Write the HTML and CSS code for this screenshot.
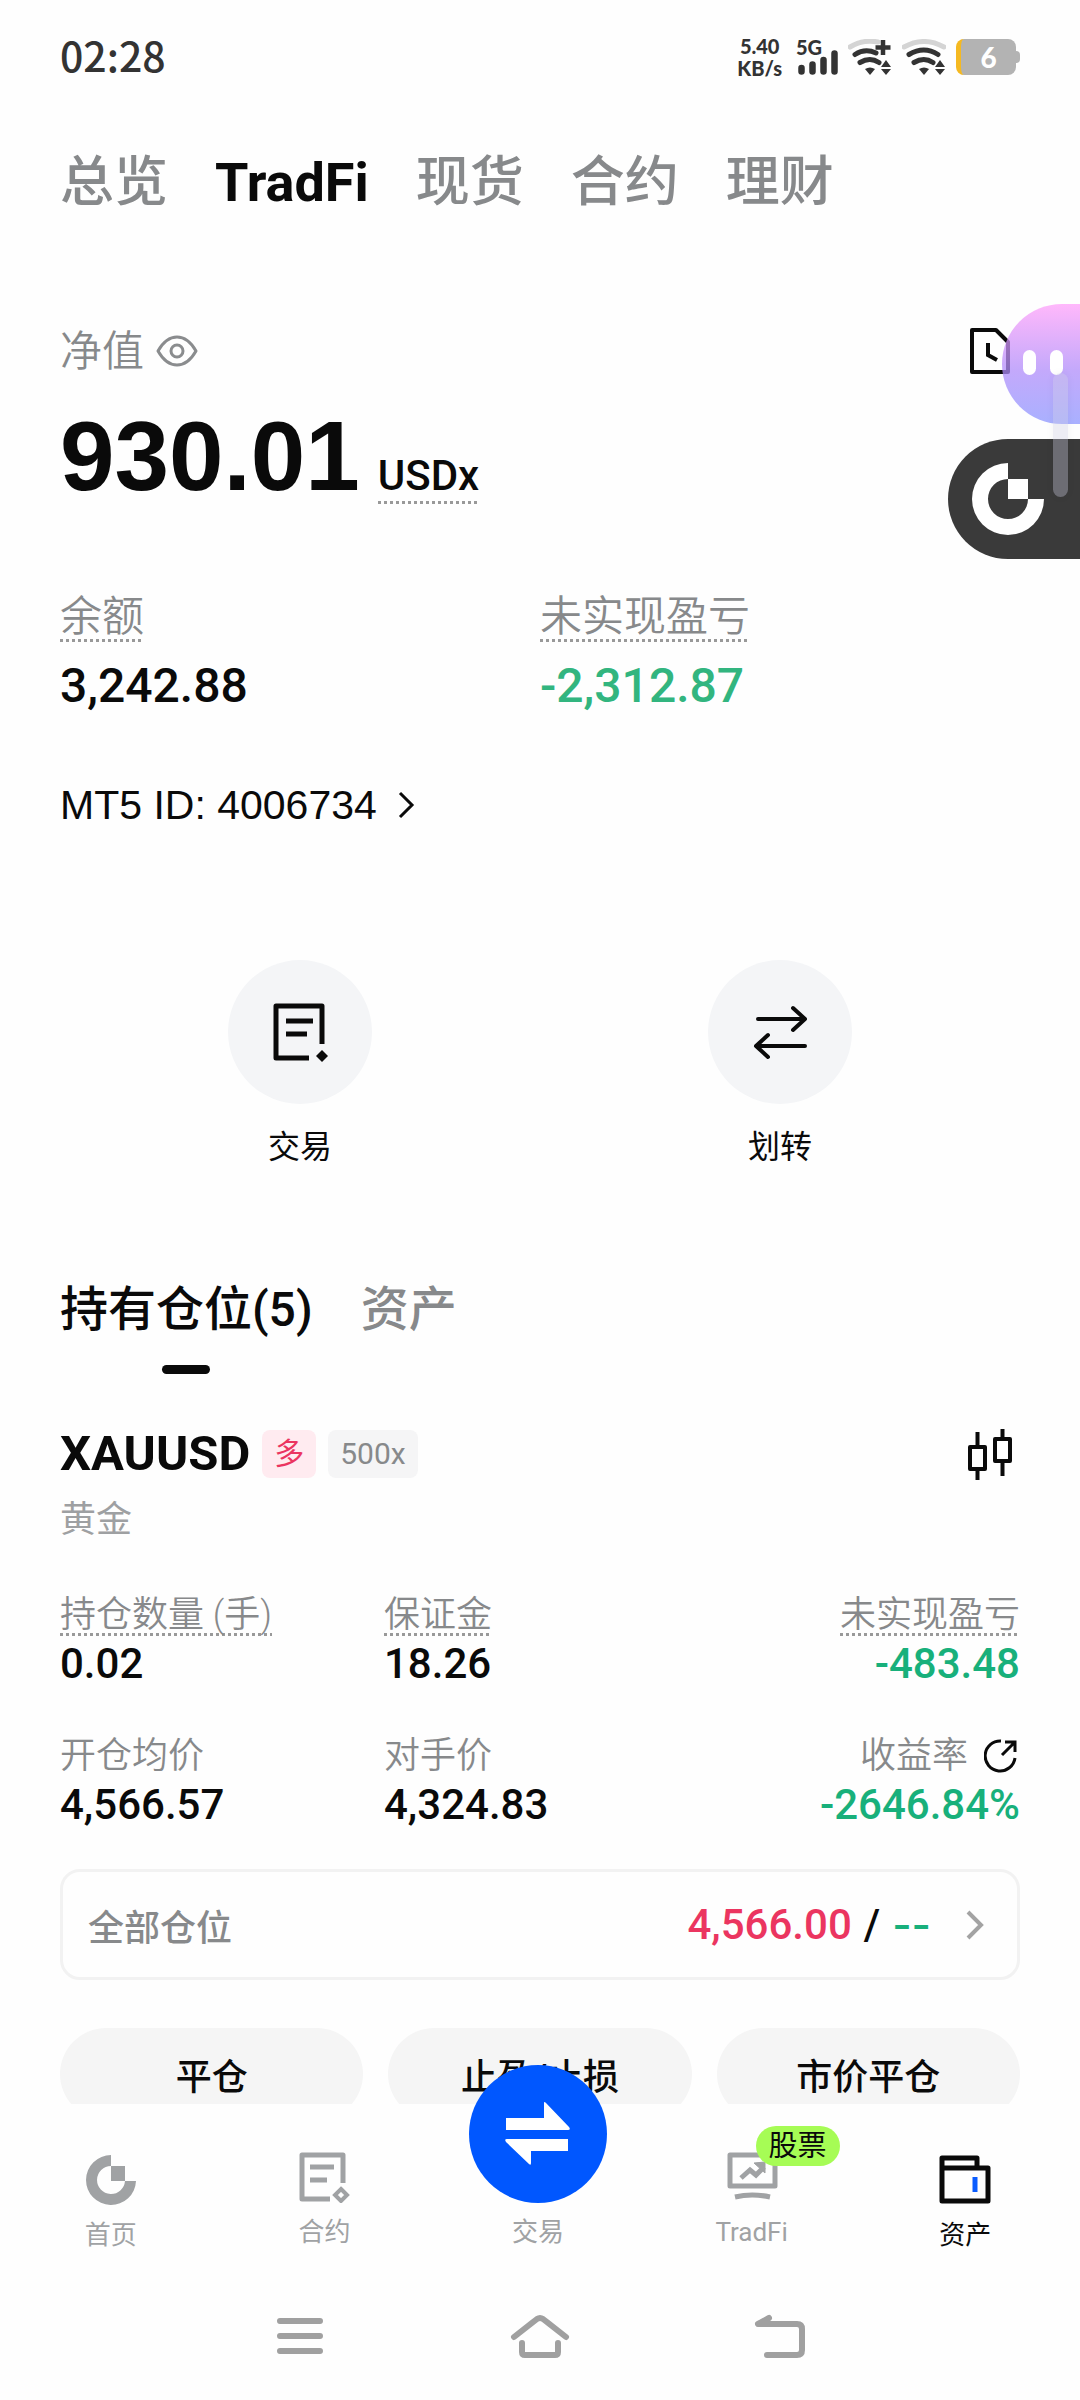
FILE: index.html
```html
<!DOCTYPE html>
<html lang="zh-CN">
  <head>
    <meta charset="utf-8" />
    <meta name="viewport" content="width=device-width, initial-scale=1" />
    <title>TradFi 资产</title>
    <link rel="stylesheet" href="styles.css">
  </head>
  <body>
    <header class="status-bar">
      <span class="time">02:28</span>
      <div class="status-icons">
        <div class="net-speed"><span>5.40</span><span>KB/s</span></div>
        <div class="signal">
          <span>5G</span>
          <svg width="42" height="36" viewBox="0 0 42 36"><path d="M5.500 29v3.500M16.500 25.500v7M27.500 21v11.500M38.500 14.500v18" stroke="#333" stroke-width="6.500" stroke-linecap="round"/></svg>
        </div>
        <svg width="44" height="36" viewBox="0 0 44 36" fill="none">
          <path d="M2 8Q15 0 30 3" stroke="#d4d4d4" stroke-width="5" stroke-linecap="round"/>
          <path d="M7 15.500Q17 9 28 14M12 23.500Q22 17.500 31 23.500" stroke="#333" stroke-width="5" stroke-linecap="round"/>
          <path d="M17 30Q22 27 27 30L22 36z" fill="#333"/>
          <path d="M35 1v15M27.500 8.500h15" stroke="#333" stroke-width="4.500"/>
          <path d="M38 21l5 7H33zM38 36l5-6H33z" fill="#333"/>
        </svg>
        <svg width="44" height="36" viewBox="0 0 44 36" fill="none">
          <path d="M2 8Q22-3 42 8" stroke="#d4d4d4" stroke-width="5" stroke-linecap="round"/>
          <path d="M7 15.500Q22 6.500 36 15.500M12 23.500Q22 17.500 31 23.500" stroke="#333" stroke-width="5" stroke-linecap="round"/>
          <path d="M17 30Q22 27 27 30L22 36z" fill="#333"/>
          <path d="M38 21l5 7H33zM38 36l5-6H33z" fill="#333"/>
        </svg>
        <div class="battery">6</div>
      </div>
    </header>

    <main class="page">
      <nav class="top-tabs">
        <a href="#">总览</a>
        <a href="#" class="active">TradFi</a>
        <a href="#">现货</a>
        <a href="#">合约</a>
        <a href="#">理财</a>
      </nav>

      <section class="equity">
        <div class="equity-head">
          <span class="label">净值</span>
          <button class="icon-btn" aria-label="显示或隐藏金额">
            <svg width="42" height="36" viewBox="0 0 42 36" fill="none" stroke="#8a8c8e" stroke-width="3"><path d="M2 18Q10 4 21 4t19 14Q32 32 21 32T2 18z" stroke-linejoin="round"/><circle cx="21" cy="18" r="6"/></svg>
          </button>
          <button class="icon-btn history" aria-label="历史记录">
            <svg width="40" height="48" viewBox="0 0 40 48" fill="none" stroke="#0a0a0a" stroke-width="4"><path d="M2 3h24l12 12v30H2z" stroke-linejoin="round"/><path d="M18 16v12l9 5"/></svg>
          </button>
        </div>
        <div class="amount">
          <strong>930.01</strong>
          <span class="unit dotted">USDx</span>
        </div>
        <div class="balances">
          <div>
            <span class="label dotted">余额</span>
            <div class="balance">3,242.88</div>
          </div>
          <div>
            <span class="label dotted">未实现盈亏</span>
            <div class="balance down">-2,312.87</div>
          </div>
        </div>
        <a href="#" class="account">MT5 ID: 4006734
          <svg width="18" height="28" viewBox="0 0 18 28" fill="none" stroke="#0a0a0a" stroke-width="3"><path d="M3 2l12 12L3 26"/></svg>
        </a>
      </section>

      <section class="actions">
        <button>
          <span class="circle">
            <svg width="58" height="60" viewBox="0 0 58 60" fill="none" stroke="#0a0a0a" stroke-width="5"><path d="M38 56H5V4h46v38" stroke-linejoin="round"/><path d="M15 19h27M15 32h21"/><path d="M51 48l6 6-6 6-6-6z" fill="#0a0a0a" stroke="none"/></svg>
          </span>
          交易
        </button>
        <button>
          <span class="circle">
            <svg width="56" height="56" viewBox="0 0 56 56" fill="none" stroke="#0a0a0a" stroke-width="4" stroke-linecap="round" stroke-linejoin="round"><path d="M6 15h47M41 4l12 11-12 11M53 42H4M16 31L4 42l12 11"/></svg>
          </span>
          划转
        </button>
      </section>

      <nav class="sub-tabs">
        <a href="#" class="active">持有仓位(5)</a>
        <a href="#">资产</a>
      </nav>

      <section class="position">
        <div class="position-head">
          <h2>XAUUSD</h2>
          <span class="tag long">多</span>
          <span class="tag">500x</span>
          <button class="icon-btn chart" aria-label="K线">
            <svg width="48" height="52" viewBox="0 0 48 52" fill="none" stroke="#0a0a0a" stroke-width="4"><path d="M4 19h15v22H4zM29 11h15v22H29z" stroke-linejoin="round"/><path d="M11.500 4v15M11.500 41v11M36.500 1v10M36.500 33v15"/></svg>
          </button>
        </div>
        <p class="name">黄金</p>

        <div class="stats">
          <div>
            <span class="stat-label dotted">持仓数量 (手)</span>
            <div class="stat">0.02</div>
          </div>
          <div>
            <span class="stat-label dotted">保证金</span>
            <div class="stat">18.26</div>
          </div>
          <div>
            <span class="stat-label dotted">未实现盈亏</span>
            <div class="stat up">-483.48</div>
          </div>
          <div>
            <span class="stat-label">开仓均价</span>
            <div class="stat">4,566.57</div>
          </div>
          <div>
            <span class="stat-label">对手价</span>
            <div class="stat">4,324.83</div>
          </div>
          <div>
            <span class="stat-label">收益率
              <button class="icon-btn share" aria-label="分享">
                <svg width="36" height="36" viewBox="0 0 36 36" fill="none" stroke="#0a0a0a" stroke-width="3"><path d="M17 3a15 15 0 1 0 14 17"/><path d="M18 17L31 4M21 4h10v10"/></svg>
              </button>
            </span>
            <div class="stat up">-2646.84%</div>
          </div>
        </div>

        <a href="#" class="tpsl">
          <span>全部仓位</span>
          <span class="tpsl-value"><span class="red">4,566.00</span> / <span class="empty">--</span></span>
          <svg width="20" height="32" viewBox="0 0 20 32" fill="none" stroke="#a3a3a3" stroke-width="4"><path d="M3 3l13 13L3 29"/></svg>
        </a>

        <div class="buttons">
          <button>平仓</button>
          <button>止盈/止损</button>
          <button>市价平仓</button>
        </div>
      </section>
    </main>

    <div class="scroll-thumb"></div>
    <button class="assistant" aria-label="助手"><i></i><i></i></button>
    <button class="float-logo" aria-label="悬浮窗">
      <svg width="72" height="72" viewBox="0 0 72 72" fill="#fff"><path d="M36 0v16a20 20 0 1 0 20 20h16A36 36 0 1 1 36 0z"/><path d="M36 16h20v20H36z"/></svg>
    </button>

    <footer class="bottom">
      <nav class="tab-bar">
        <a href="#" class="low">
          <svg width="50" height="52" viewBox="0 0 50 52" fill="#a0a2a4"><path d="M25 1v11a14 14 0 1 0 14 15h11A25 25 0 1 1 25 1z"/><path d="M25 12h14v15H25z"/></svg>
          首页
        </a>
        <a href="#">
          <svg width="52" height="52" viewBox="0 0 52 52" fill="none" stroke="#a0a2a4" stroke-width="5"><path d="M32 48H4V4h41v28" stroke-linejoin="round"/><path d="M12 16h24M12 29h17"/><path d="M43 38l6 6-6 6-6-6z" stroke-width="4"/></svg>
          合约
        </a>
        <a href="#">
          <span class="trade">
            <svg width="70" height="64" viewBox="0 0 70 64" fill="#fff"><path d="M3 16h38V1q0-2 2 0l23 24q2 3-1 3H3zM65 37H4q-3 0-1 3l23 22q2 2 2-1V49h37z"/></svg>
          </span>
          交易
        </a>
        <a href="#" class="stock">
          <svg width="52" height="52" viewBox="0 0 52 52" fill="none" stroke="#a0a2a4" stroke-width="5"><path d="M4 4h45v31H4z" stroke-linejoin="round"/><path d="M15 27l9-8 6 5 8-8"/><path d="M28 12l11-1v11z" fill="#a0a2a4" stroke-width="1"/><path d="M9 46q17-4 35 0"/></svg>
          <span class="badge">股票</span>
          TradFi
        </a>
        <a href="#" class="active low">
          <svg width="52" height="52" viewBox="0 0 52 52" fill="none" stroke="#0a0a0a" stroke-width="5"><path d="M3 14h46v33H3zM3 14V4h35v10" stroke-linejoin="round"/><path d="M36 23v15" stroke="#0a5cff"/></svg>
          资产
        </a>
      </nav>
      <div class="system-nav">
        <button aria-label="最近任务"><svg width="60" height="48" viewBox="0 0 60 48"><path d="M10 9h40M10 24h40M10 39h40"/></svg></button>
        <button aria-label="主页"><svg width="60" height="48" viewBox="0 0 60 48"><path d="M4 25L27 7q3-2 6 0l23 18M12 31v9q0 3 3 3h30q3 0 3-3v-9"/></svg></button>
        <button aria-label="返回"><svg width="60" height="48" viewBox="0 0 60 48"><path d="M19 6L8 12h39q5 0 5 5v21q0 5-5 5H17"/></svg></button>
      </div>
    </footer>
  </body>
</html>
```
FILE: styles.css
```css
* {
  box-sizing: border-box;
}

body {
  margin: 0;
  min-height: 100vh;
  background: #fefefe;
  color: #0a0a0a;
  font-family: Roboto, "Noto Sans CJK SC", sans-serif;
}

a {
  color: inherit;
  text-decoration: none;
}

button {
  padding: 0;
  border: none;
  background: none;
  color: inherit;
  font: inherit;
  cursor: pointer;
}

svg {
  display: block;
  flex-shrink: 0;
}

.icon-btn {
  display: flex;
}

/* phone status bar */
.status-bar {
  display: flex;
  justify-content: space-between;
  align-items: center;
  height: 114px;
  padding: 0 60px;
  color: #333;
}

.time {
  padding-bottom: 6px;
  font: 500 41px "Noto Sans CJK SC", sans-serif;
}

.status-icons {
  display: flex;
  align-items: center;
  gap: 10px;
  font-family: Lato, sans-serif;
  font-weight: 900;
}

.net-speed {
  display: flex;
  flex-direction: column;
  align-items: center;
  font-size: 20px;
  line-height: 22px;
  padding-right: 4px;
}

.signal {
  position: relative;
  font-size: 20px;
  line-height: 16px;
}

.signal span {
  position: absolute;
  top: 0;
  left: 0;
}

.battery {
  position: relative;
  width: 60px;
  height: 36px;
  margin-right: 4px;
  border-left: 5px solid #f5b921;
  border-radius: 8px;
  background: #b3b3b3;
  color: #fff;
  font-size: 28px;
  line-height: 36px;
  text-align: center;
}

.battery::after {
  content: "";
  position: absolute;
  top: 12px;
  right: -4px;
  width: 4px;
  height: 12px;
  border-radius: 0 4px 4px 0;
  background: #b3b3b3;
}

.page {
  padding: 39px 60px 300px;
}

.top-tabs {
  display: flex;
  gap: 47px;
  font-size: 54px;
  font-weight: 500;
  line-height: 60px;
  color: #87898b;
}

.top-tabs .active {
  color: #0a0a0a;
  font-weight: 700;
}

/* net value */
.equity-head {
  display: flex;
  align-items: center;
  gap: 12px;
  height: 60px;
  margin-top: 108px;
}

.label {
  color: #87898b;
  font-size: 42px;
  font-weight: 350;
  line-height: 51px;
}

.history {
  margin-left: auto;
  margin-right: 10px;
}

/* square-dotted hint underline */
.dotted {
  display: inline-block;
  background: repeating-linear-gradient(90deg, #999 0 3px, transparent 3px 6px) left bottom / 100% 3px no-repeat;
}

.amount {
  display: flex;
  align-items: baseline;
  gap: 18px;
  height: 96px;
  margin-top: 27px;
}

.amount strong {
  font-family: "Liberation Sans", sans-serif;
  font-size: 98px;
  line-height: 96px;
}

.unit {
  font-size: 42px;
  font-weight: 500;
  line-height: 56px;
}

.balances {
  display: grid;
  grid-template-columns: 1fr 1fr;
  margin-top: 87px;
}

.balance {
  margin-top: 14px;
  font-size: 48px;
  font-weight: 500;
  line-height: 60px;
}

.down {
  color: #32b57f;
}

.up {
  color: #18b07b;
}

.red {
  color: #eb3560;
}

.account {
  display: flex;
  align-items: center;
  gap: 20px;
  margin-top: 59px;
  font-family: "Liberation Sans", sans-serif;
  font-size: 41px;
  line-height: 60px;
}

.actions {
  display: grid;
  grid-template-columns: 1fr 1fr;
  margin-top: 125px;
}

.actions button {
  display: flex;
  flex-direction: column;
  align-items: center;
  gap: 23px;
  font-size: 32px;
  line-height: 40px;
}

.circle {
  display: flex;
  align-items: center;
  justify-content: center;
  width: 144px;
  height: 144px;
  border-radius: 50%;
  background: #f4f5f7;
}

.sub-tabs {
  display: flex;
  gap: 48px;
  margin-top: 113px;
  color: #87898b;
  font-size: 48px;
  font-weight: 500;
  line-height: 60px;
}

.sub-tabs .active {
  color: #0a0a0a;
}

.sub-tabs .active::after {
  content: "";
  display: block;
  width: 48px;
  height: 9px;
  margin: 25px auto 0;
  border-radius: 5px;
  background: #0a0a0a;
}

/* position card */
.position-head {
  display: flex;
  align-items: center;
  height: 48px;
  margin-top: 56px;
}

.position-head h2 {
  margin: 0 12px 0 0;
  font-size: 49px;
  font-weight: 700;
  line-height: 48px;
}

.tag {
  margin-right: 12px;
  padding: 0 12px;
  border-radius: 8px;
  background: #f5f5f6;
  color: #87898b;
  font-size: 30px;
  line-height: 48px;
}

.long {
  background: #ffebf0;
  color: #eb3560;
}

.chart {
  margin-left: auto;
  margin-right: 6px;
}

.name {
  margin: 20px 0 52px;
  color: #9ea0a2;
  font-size: 36px;
  line-height: 44px;
}

.stats {
  display: grid;
  grid-template-columns: 1fr 1fr 1fr;
  gap: 50px 12px;
}

.stats > div {
  display: flex;
  flex-direction: column;
  align-items: flex-start;
  gap: 7px;
}

.stats > div:nth-child(3n) {
  align-items: flex-end;
}

.stat-label {
  display: flex;
  align-items: center;
  gap: 16px;
  color: #87898b;
  font-size: 36px;
  font-weight: 350;
  line-height: 42px;
}

.stat {
  font-size: 42px;
  font-weight: 500;
  line-height: 42px;
}

.tpsl {
  display: flex;
  align-items: center;
  height: 111px;
  margin-top: 43px;
  padding: 0 32px 0 25px;
  border: 3px solid #f2f2f2;
  border-radius: 20px;
  color: #87898b;
  font-size: 36px;
  font-weight: 500;
}

.tpsl-value {
  display: flex;
  align-items: center;
  gap: 12px;
  margin: 0 34px 0 auto;
  color: #0a0a0a;
  font-size: 42px;
}

.empty {
  color: #18b07b;
  font-family: Inter, sans-serif;
}

.buttons {
  display: grid;
  grid-template-columns: 1fr 1fr 1fr;
  gap: 25px;
  margin-top: 48px;
}

.buttons button {
  height: 92px;
  border-radius: 46px;
  background: #f5f5f5;
  font-size: 36px;
  font-weight: 500;
}

/* floating widgets on the right edge */
.assistant,
.float-logo {
  position: fixed;
  right: 0;
  height: 120px;
  border-radius: 60px 0 0 60px;
}

.assistant {
  top: 304px;
  display: flex;
  gap: 14px;
  width: 78px;
  padding: 46px 0 0 21px;
  background: linear-gradient(rgba(255, 160, 250, .75), rgba(176, 140, 250, .75) 55%, rgba(140, 150, 255, .75));
}

.assistant i {
  width: 13px;
  height: 25px;
  border-radius: 7px;
  background: #fff;
}

.float-logo {
  top: 439px;
  width: 132px;
  padding-left: 24px;
  background: #3a3a3a;
}

.scroll-thumb {
  position: fixed;
  z-index: 2;
  top: 373px;
  right: 12px;
  width: 15px;
  height: 124px;
  border-radius: 8px;
  background: rgba(205, 205, 225, .35);
  box-shadow: 0 0 8px rgba(0, 0, 0, .05);
}

.bottom {
  position: fixed;
  right: 0;
  bottom: 0;
  left: 0;
  background: #fefefe;
}

.tab-bar {
  display: grid;
  grid-template-columns: repeat(5, 1fr);
  height: 168px;
  padding: 0 8px 0 4px;
  color: #a0a2a4;
  font-size: 26px;
  line-height: 36px;
}

.tab-bar a {
  position: relative;
  display: flex;
  flex-direction: column;
  align-items: center;
  gap: 11px;
  padding-top: 47px;
}

.tab-bar .low {
  padding-top: 50px;
}

.tab-bar .active {
  color: #0a0a0a;
}

/* raised round button, sticks out above the bar */
.trade {
  display: flex;
  align-items: center;
  justify-content: center;
  width: 138px;
  height: 138px;
  margin-top: -86px;
  border-radius: 50%;
  background: #0057ff;
}

.badge {
  position: absolute;
  top: 22px;
  left: 50%;
  margin-left: 4px;
  padding: 0 13px;
  border-radius: 20px;
  background: #a6fc55;
  color: #0a0a0a;
  font-size: 29px;
  line-height: 40px;
}

.system-nav {
  display: flex;
  justify-content: center;
  gap: 180px;
  height: 128px;
}

.system-nav path {
  fill: none;
  stroke: #a0a0a0;
  stroke-width: 6px;
  stroke-linecap: round;
  stroke-linejoin: round;
}
```
